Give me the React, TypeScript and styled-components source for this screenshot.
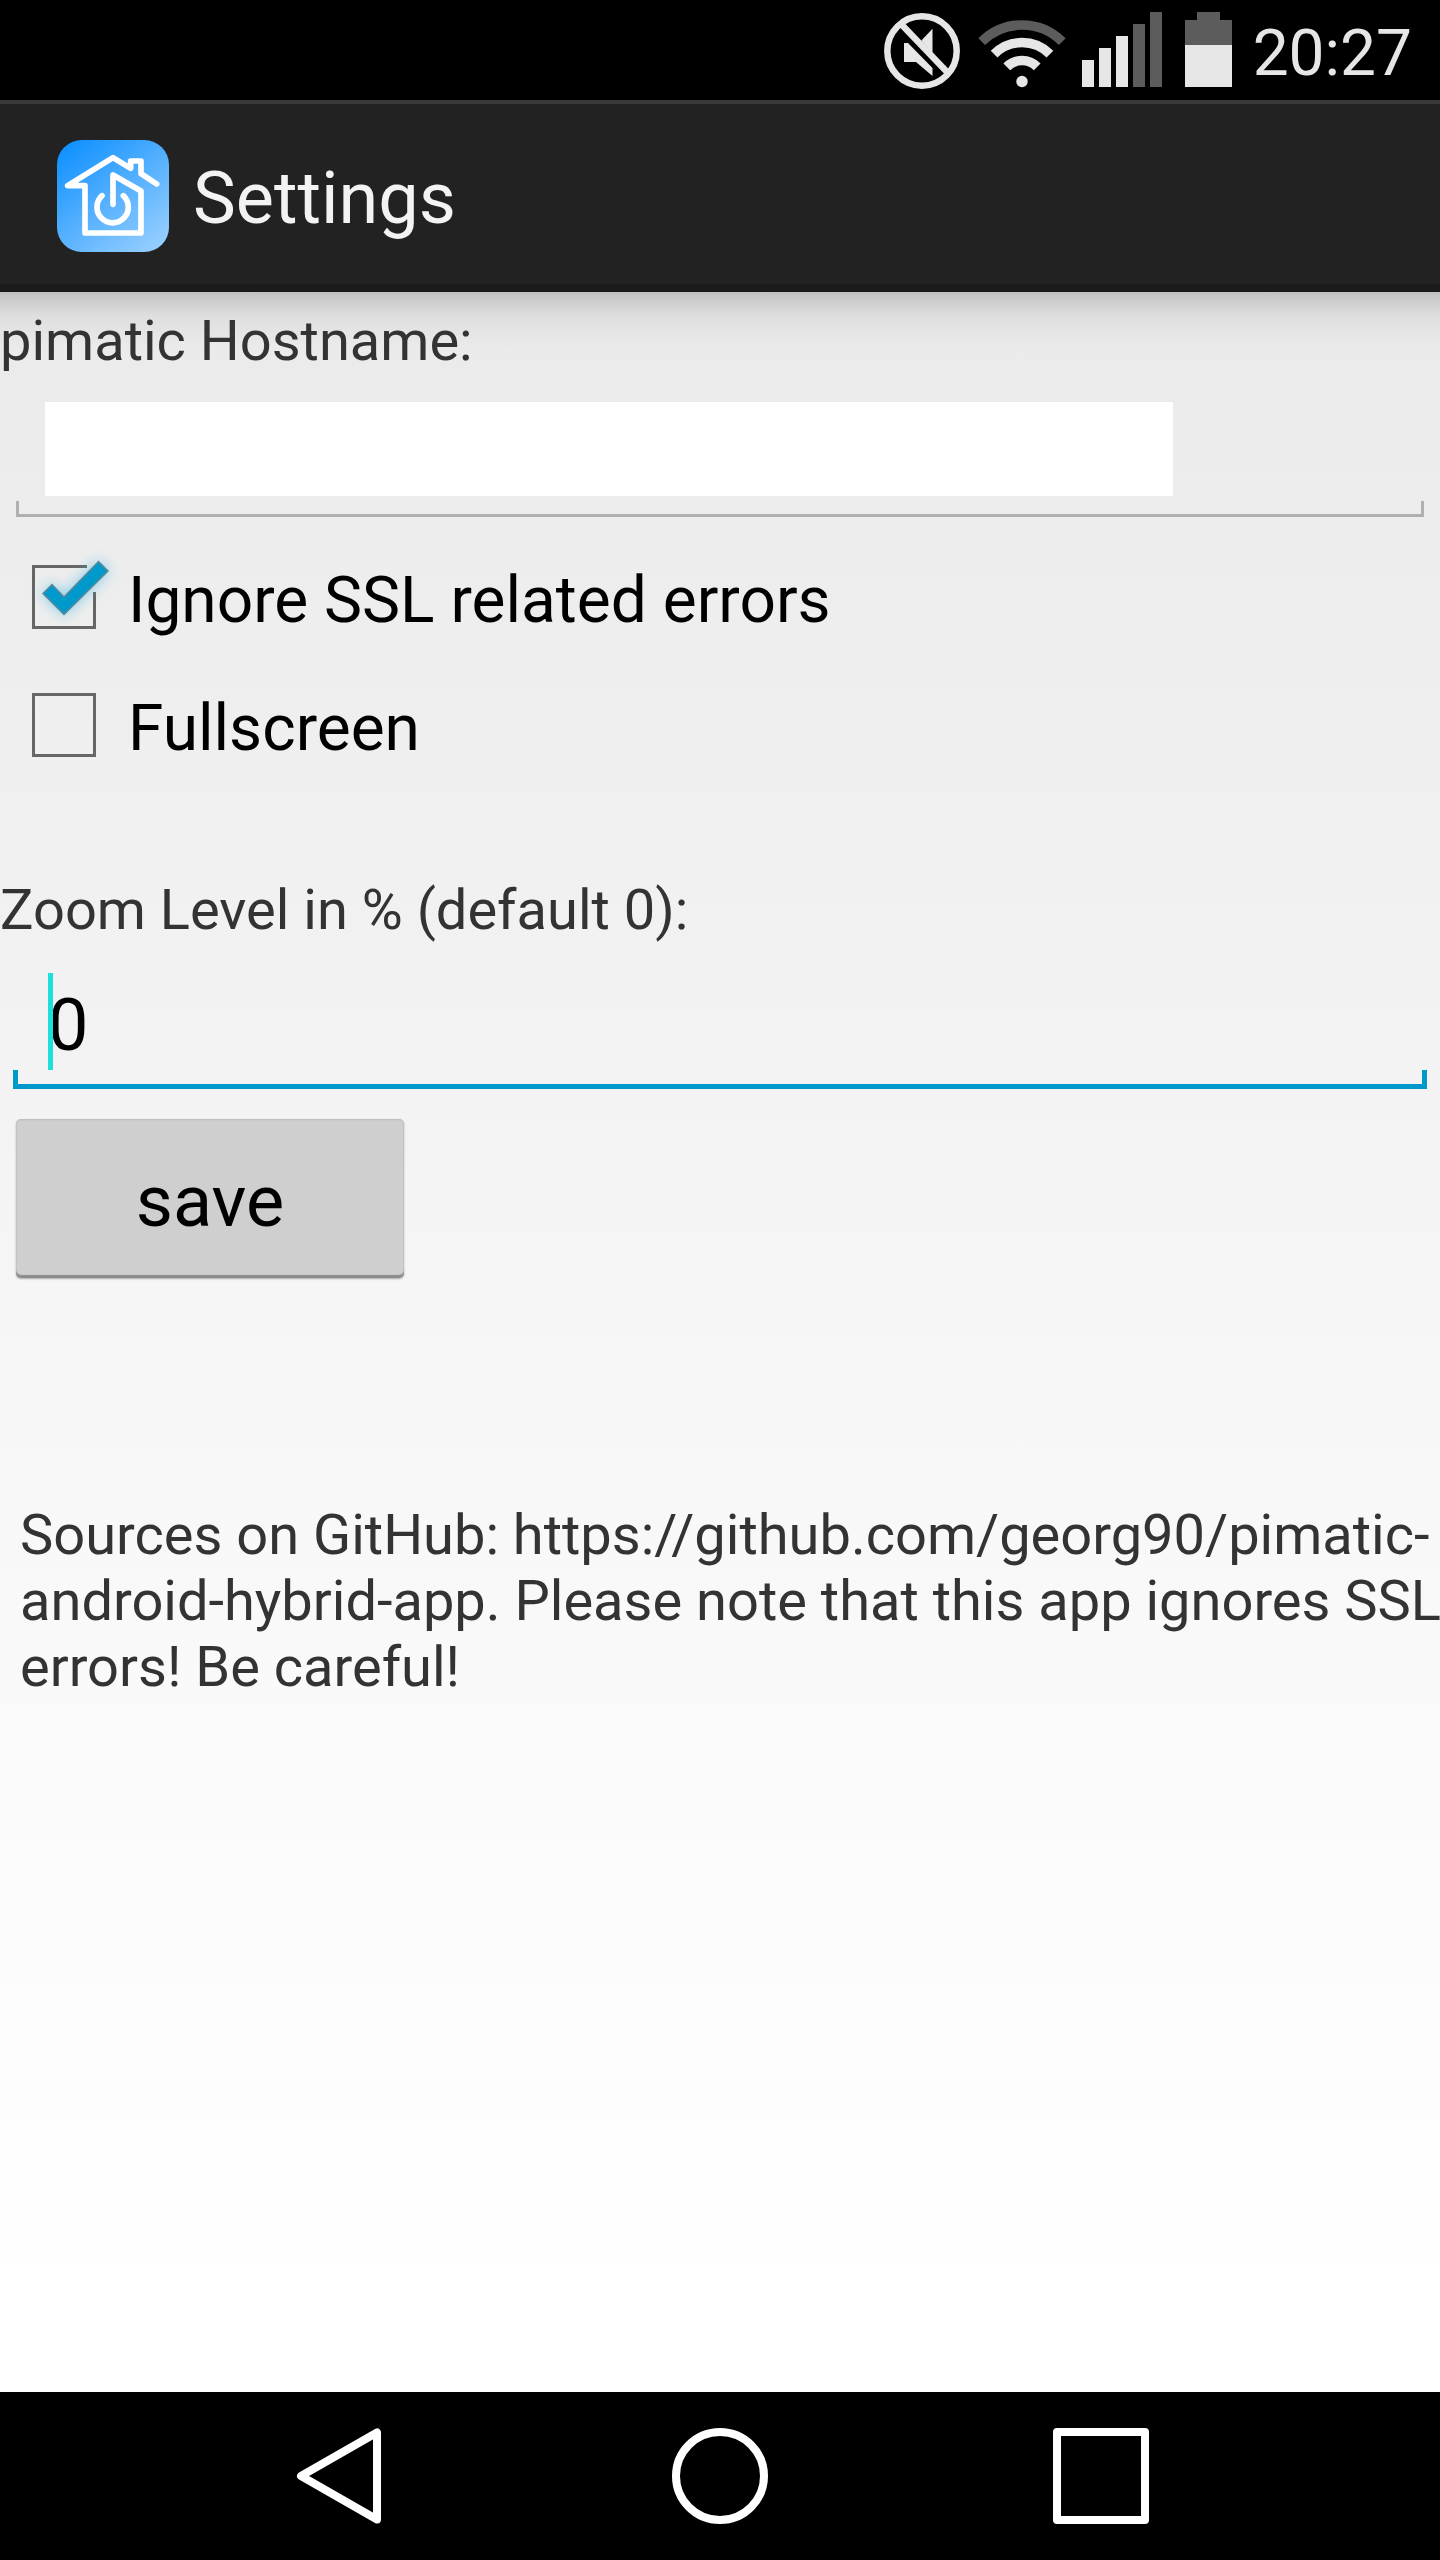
import React, { useState } from "react";
import styled, { createGlobalStyle } from "styled-components";

const GlobalStyle = createGlobalStyle`
  * { box-sizing: border-box; }
  body { margin: 0; background: #000; }
  button, input { font-family: inherit; }
`;

const Screen = styled.div`
  display: flex;
  flex-direction: column;
  min-height: 100vh;
  font-family: Roboto, "Liberation Sans", sans-serif;
  color: #000;
`;

const StatusBar = styled.div`
  display: flex;
  align-items: center;
  justify-content: flex-end;
  height: 100px;
  padding-right: 28px;
  background: #000;
  color: #e6e6e6;
`;

const StatusIcon = styled.svg<{ $gap: number }>`
  display: block;
  flex: none;
  overflow: visible;
  margin-right: ${(p) => p.$gap}px;
`;

const Clock = styled.time`
  padding-top: 8px;
  font-size: 64px;
  line-height: 76px;
`;

const ActionBar = styled.header`
  display: flex;
  align-items: center;
  gap: 24px;
  height: 192px;
  padding: 4px 0 0 57px;
  border-top: 4px solid #393939;
  border-bottom: 8px solid #1b1b1b;
  background: #222;
`;

const Logo = styled.svg`
  display: block;
  flex: none;
  width: 112px;
  height: 112px;
`;

const Title = styled.h1`
  margin: 0;
  padding-top: 6px;
  font-size: 72px;
  font-weight: 400;
  line-height: 84px;
  color: #f3f3f3;
`;

const Content = styled.main`
  flex: 1;
  overflow: hidden;
  padding-top: 16px;
  background:
    linear-gradient(rgba(0, 0, 0, 0.17), rgba(0, 0, 0, 0.05) 24px, rgba(0, 0, 0, 0) 56px),
    linear-gradient(#eaeaea, #f1f1f1 29%, #f8f8f8 58%, #fff 95%);
`;

const FieldLabel = styled.label`
  display: block;
  font-size: 56px;
  line-height: 66px;
  color: #333;
`;

const line = (colour: string, width: number, tick: number) => `
  background:
    linear-gradient(${colour}, ${colour}) left bottom / 100% ${width}px no-repeat,
    linear-gradient(${colour}, ${colour}) left bottom / ${width}px ${tick}px no-repeat,
    linear-gradient(${colour}, ${colour}) right bottom / ${width}px ${tick}px no-repeat;
`;

const Field = styled.div<{ $active?: boolean }>`
  position: relative;
  margin: ${(p) => (p.$active ? "30px 13px 0" : "28px 16px 0")};
  padding: ${(p) => (p.$active ? "0 35px 19px" : "0 29px 21px")};
  ${(p) => (p.$active ? line("#0099cc", 5, 19) : line("#b0b0b0", 3, 16))}
`;

const TextInput = styled.input<{ $filled?: boolean }>`
  display: block;
  width: 100%;
  max-width: ${(p) => (p.$filled ? "1128px" : "none")};
  height: ${(p) => (p.$filled ? 94 : 97)}px;
  padding: ${(p) => (p.$filled ? "0" : "8px 0 0")};
  border: 0;
  outline: 0;
  background: ${(p) => (p.$filled ? "#fff" : "transparent")};
  color: #000;
  font-size: 72px;
  line-height: 84px;
`;

const Caret = styled.span`
  position: absolute;
  top: 0;
  left: 35px;
  width: 5px;
  height: 97px;
  background: #1fdfda;
`;

const Options = styled.div`
  padding: 16px 0 88px;
`;

const Option = styled.label`
  display: flex;
  align-items: center;
  gap: 32px;
  height: 128px;
  padding-left: 32px;
  font-size: 64px;
  line-height: 76px;
`;

const OptionText = styled.span`
  padding-top: 8px;
`;

const BoxHolder = styled.span`
  position: relative;
  flex: none;
  width: 64px;
  height: 64px;
`;

const Box = styled.input`
  appearance: none;
  display: block;
  width: 64px;
  height: 64px;
  margin: 0;
  border: 3px solid #666;
  &:checked { border-color: transparent; }
`;

const Tick = styled.svg`
  position: absolute;
  inset: 0;
  overflow: visible;
  pointer-events: none;
`;

const TickMark = styled.path`
  fill: #0099cc;
  stroke: #5f8795;
  stroke-width: 1.5;
  filter: drop-shadow(0 0 7px rgba(51, 181, 229, 0.6));
`;

const SaveButton = styled.button`
  display: block;
  width: 388px;
  height: 159px;
  margin: 30px 16px 0;
  padding: 7px 0 0;
  border: 0;
  border-radius: 5px;
  background: #cfcfcf;
  box-shadow: inset 0 -3px 1px #8c8c8c, inset 0 1px 2px #bbb, 0 1px 2px #aaa;
  color: #000;
  font-size: 72px;
  line-height: 84px;
`;

const Note = styled.p`
  margin: 0 -12px 0 0;
  padding: 224px 0 0 20px;
  font-size: 56px;
  line-height: 66px;
  color: #333;
`;

const NavBar = styled.nav`
  display: grid;
  grid-template-columns: repeat(3, 1fr);
  height: 168px;
  padding: 0 148px;
  background: #000;
`;

const NavButton = styled.button`
  display: flex;
  align-items: center;
  justify-content: center;
  padding: 0;
  border: 0;
  background: transparent;
`;

const NavIcon = styled.svg`
  display: block;
  width: 96px;
  height: 96px;
  fill: none;
  stroke: #fff;
  stroke-width: 8;
  stroke-linejoin: round;
`;

function StatusIcons() {
  return (
    <>
      <StatusIcon $gap={18} width="76" height="76" viewBox="0 -1 76 76" role="img" aria-label="Muted">
        <circle cx="38" cy="38" r="34.7" fill="none" stroke="#e6e6e6" strokeWidth="6.5" />
        <path d="M18 12L64 60" stroke="#e6e6e6" strokeWidth="6.5" />
        <path d="M37.400 27.400L48.500 15.700V40L46 38Z" fill="#e6e6e6" />
        <path d="M20 30H24L48.500 55V63L32 49H20Z" fill="#e6e6e6" />
      </StatusIcon>
      <StatusIcon $gap={16} width="88" height="76" viewBox="0 0 88 76" fill="none" strokeWidth="9.5" role="img" aria-label="Wi-Fi">
        <path d="M3.700 29.700A57 57 0 0 1 84.300 29.700" stroke="#5c5c5c" />
        <path d="M16.100 42.100A39.500 39.500 0 0 1 71.900 42.100" stroke="#e6e6e6" />
        <path d="M28.800 54.800A21.500 21.500 0 0 1 59.200 54.800" stroke="#e6e6e6" />
        <circle cx="44" cy="69.500" r="5.700" fill="#e6e6e6" />
      </StatusIcon>
      <StatusIcon $gap={23} width="80" height="76" viewBox="0 0 80 76" role="img" aria-label="Signal">
        {[27, 39, 51, 63, 75].map((h, i) => (
          <rect key={h} x={i * 17} y={75 - h} width="12" height={h} fill={i < 3 ? "#e6e6e6" : "#5c5c5c"} />
        ))}
      </StatusIcon>
      <StatusIcon $gap={21} width="47" height="76" viewBox="0 0 47 76" role="img" aria-label="Battery">
        <path d="M12 0H35V8H47V33H0V8H12Z" fill="#5c5c5c" />
        <rect y="33" width="47" height="42" fill="#e6e6e6" />
      </StatusIcon>
    </>
  );
}

function AppLogo() {
  return (
    <Logo viewBox="0 0 336 336" aria-hidden="true">
      <defs>
        <linearGradient id="sky" x1="0.1" y1="0" x2="0.9" y2="1">
          <stop offset="0" stopColor="#0d90ff" />
          <stop offset="0.5" stopColor="#55b0ff" />
          <stop offset="1" stopColor="#98d0ff" />
        </linearGradient>
      </defs>
      <rect width="336" height="336" rx="74" fill="url(#sky)" />
      <g fill="none" stroke="#fff" strokeWidth="17" strokeLinecap="round" strokeLinejoin="round">
        <path d="M299 132L252 101V63H221V85L168 53L32 137H84V279H252V153L168 105V193" />
        <path d="M135 167A47 47 0 1 0 199 167" />
      </g>
    </Logo>
  );
}

function CheckOption({ label, initial }: { label: string; initial: boolean }) {
  const [checked, setChecked] = useState(initial);
  return (
    <Option>
      <BoxHolder>
        <Box type="checkbox" checked={checked} onChange={(e) => setChecked(e.target.checked)} />
        {checked && (
          <Tick width="64" height="64" viewBox="0 0 64 64" aria-hidden="true">
            <path d="M55 1.500H1.500V62.500H62.500V27" fill="none" stroke="#666" strokeWidth="3" />
            <TickMark d="M11 28.500L20 19.500L32 32L66.500 -3.500L76 6L32 49.500Z" />
          </Tick>
        )}
      </BoxHolder>
      <OptionText>{label}</OptionText>
    </Option>
  );
}

export default function App() {
  const [host, setHost] = useState("");
  const [zoom, setZoom] = useState("0");
  return (
    <Screen>
      <GlobalStyle />
      <StatusBar>
        <StatusIcons />
        <Clock>20:27</Clock>
      </StatusBar>
      <ActionBar>
        <AppLogo />
        <Title>Settings</Title>
      </ActionBar>
      <Content>
        <FieldLabel htmlFor="host">pimatic Hostname:</FieldLabel>
        <Field>
          <TextInput id="host" $filled value={host} onChange={(e) => setHost(e.target.value)} />
        </Field>
        <Options>
          <CheckOption label="Ignore SSL related errors" initial />
          <CheckOption label="Fullscreen" initial={false} />
        </Options>
        <FieldLabel htmlFor="zoom">Zoom Level in % (default 0):</FieldLabel>
        <Field $active>
          <Caret />
          <TextInput id="zoom" value={zoom} onChange={(e) => setZoom(e.target.value)} />
        </Field>
        <SaveButton type="button">save</SaveButton>
        <Note>
          Sources on GitHub: https://github.com/georg90/pimatic-android-hybrid-app. Please note that this app
          ignores SSL errors! Be careful!
        </Note>
      </Content>
      <NavBar>
        <NavButton type="button" aria-label="Back">
          <NavIcon viewBox="0 0 96 96">
            <path d="M86 4.500V91.500L10 48Z" />
          </NavIcon>
        </NavButton>
        <NavButton type="button" aria-label="Home">
          <NavIcon viewBox="0 0 96 96">
            <circle cx="48" cy="48" r="44" />
          </NavIcon>
        </NavButton>
        <NavButton type="button" aria-label="Recent apps">
          <NavIcon viewBox="0 0 96 96">
            <rect x="4" y="4" width="88" height="88" />
          </NavIcon>
        </NavButton>
      </NavBar>
    </Screen>
  );
}
